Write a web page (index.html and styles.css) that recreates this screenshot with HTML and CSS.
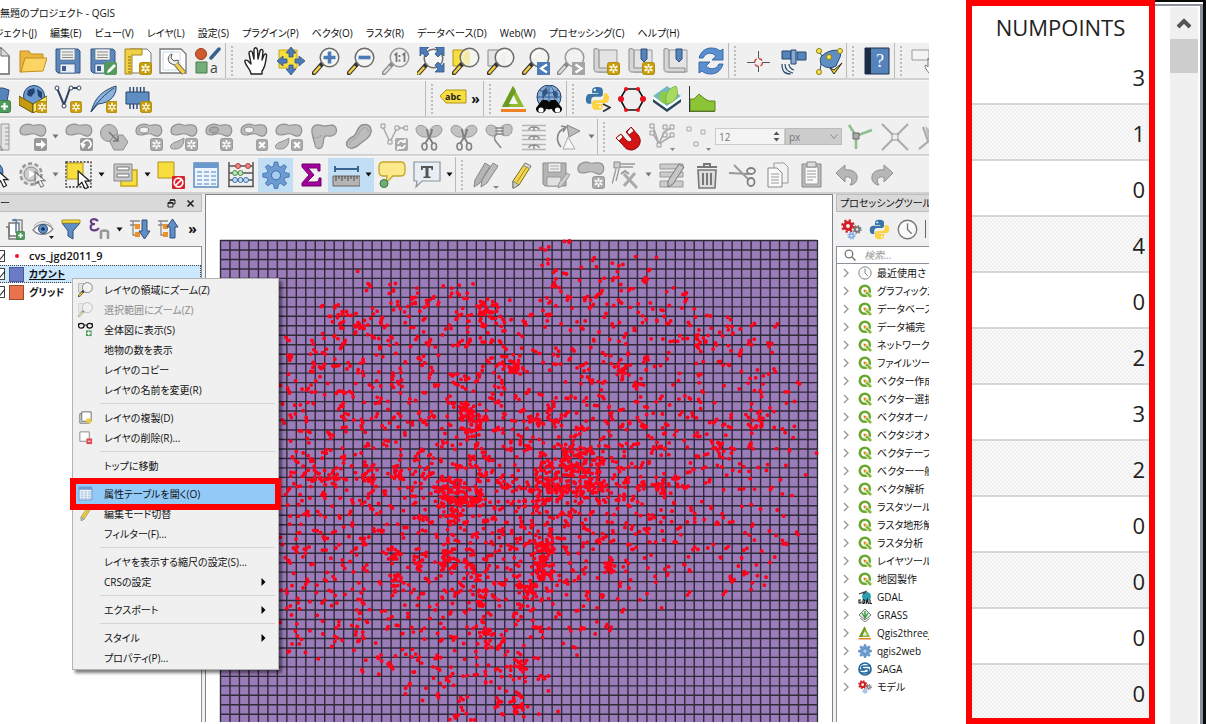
FILE: index.html
```html
<!DOCTYPE html>
<html lang="ja">
<head>
<meta charset="utf-8">
<title>無題のプロジェクト - QGIS</title>
<link rel="stylesheet" href="styles.css">
</head>
<body>
<svg class="sprite" aria-hidden="true">
  <defs>
    <symbol id="b-new" viewBox="0 0 13 13"><rect x=".5" y=".5" width="12" height="12" rx="2" fill="#c9a00c" stroke="#b08c08"/><path d="M6.500 2v9M2.600 4.200l7.800 4.600M10.400 4.200l-7.800 4.600" stroke="#fff" stroke-width="1.700"/><circle cx="6.500" cy="6.500" r="1.300" fill="#c9a00c"/></symbol>
    <symbol id="b-gnew" viewBox="0 0 13 13"><rect x=".5" y=".5" width="12" height="12" rx="2" fill="#aaa" stroke="#999"/><path d="M6.500 2v9M2.600 4.200l7.800 4.600M10.400 4.200l-7.800 4.600" stroke="#fff" stroke-width="1.700"/><circle cx="6.500" cy="6.500" r="1.300" fill="#aaa"/></symbol>
    <symbol id="b-x" viewBox="0 0 13 13"><rect x=".5" y=".5" width="12" height="12" rx="2" fill="#aaa" stroke="#999"/><path d="M3.500 3.500l6 6M9.500 3.500l-6 6" stroke="#fff" stroke-width="2.400"/></symbol>
    <symbol id="b-plus" viewBox="0 0 13 13"><rect x=".5" y=".5" width="12" height="12" rx="2" fill="#4f9a5c" stroke="#3a7d46"/><path d="M6.500 3v7M3 6.500h7" stroke="#fff" stroke-width="2.200"/></symbol>
    <symbol id="blob" viewBox="0 0 28 15"><path d="M1 8c0-6 7-8 12-6 5 1 7-1 10 0 4 1 5 7 2 10-3 3-6 0-9-1-4-1-7 1-10 1-3 0-5-1-5-4z" fill="#bdbdbd" stroke="#8f8f8f" stroke-width="1.200"/></symbol>
    <symbol id="mag" viewBox="0 0 28 28"><path d="M2 26l8-9" stroke="#333" stroke-width="4.500" stroke-linecap="round"/><path d="M2.500 25.500l5-5.500" stroke="#f4cd3b" stroke-width="2.600" stroke-linecap="round"/><circle cx="17.500" cy="10.500" r="9.300" fill="#f4f4f0" fill-opacity=".88" stroke="#6d6d6d" stroke-width="1.500"/><path d="M11 10a6.500 6.500 0 0 1 7-6" fill="none" stroke="#fff" stroke-width="1.500"/></symbol>
    <symbol id="gmag" viewBox="0 0 28 28"><path d="M2 26l8-9" stroke="#888" stroke-width="4.500" stroke-linecap="round"/><path d="M2.500 25.500l5-5.500" stroke="#ddd" stroke-width="2.400" stroke-linecap="round"/><circle cx="17.500" cy="10.500" r="9.300" fill="#f1f1f1" fill-opacity=".85" stroke="#999" stroke-width="1.500"/></symbol>
    <symbol id="ptr" viewBox="0 0 14 20"><path d="M1 1v14l3.500-3.200L7.500 18l3-1.500-3-5.800H12z" fill="#fff" stroke="#222" stroke-width="1.200"/></symbol>
    <symbol id="gear" viewBox="0 0 28 28"><g fill="#6c9bd4" stroke="#3d69a5" stroke-width=".8"><path d="M12.300 1h3.400l.8 4.100 2.200.9 3.500-2.400 2.400 2.400-2.400 3.500.9 2.200 4.100.8v3.400l-4.100.8-.9 2.200 2.400 3.500-2.400 2.400-3.500-2.400-2.200.9-.8 4.100h-3.400l-.8-4.100-2.200-.9-3.500 2.400-2.400-2.400L5.800 19l-.9-2.200-4.100-.8v-3.400l4.100-.8.900-2.200-2.400-3.500 2.400-2.400 3.500 2.400 2.200-.9z"/></g><circle cx="14" cy="14.300" r="4.500" fill="#a9cdf0" stroke="#3d69a5"/></symbol>
    <symbol id="floppy" viewBox="0 0 28 28"><path d="M2 2h22l2 2v22H4l-2-2z" fill="#5c87bd" stroke="#35577f"/><path d="M6 2h15v11H6z" fill="#f1f1ee" stroke="#54708f" stroke-width=".7"/><path d="M8 5h11M8 8h11M8 10.500h11" stroke="#888" stroke-width="1.200"/><path d="M6 17h15v9H6z" fill="#e9eef4" stroke="#35577f" stroke-width=".7"/><path d="M8 19h4v5H8z" fill="#3d5f8c"/></symbol>
    <symbol id="python" viewBox="0 0 28 28"><path d="M14 1c-5 0-6 2-6 4v3h7v1H5c-3 0-4 3-4 6 0 4 2 5 4 5h2v-4c0-2 1-4 4-4h6c2 0 3-1 3-3V5c0-3-2-4-6-4z" fill="#3a75a8"/><path d="M14 27c5 0 6-2 6-4v-3h-7v-1h10c3 0 4-3 4-6 0-3-2-5-4-5h-2v4c0 2-1 4-4 4h-6c-2 0-3 1-3 3v4c0 3 2 4 6 4z" fill="#fdd243"/><circle cx="11" cy="4.500" r="1.300" fill="#fff"/><circle cx="17" cy="23.500" r="1.300" fill="#fff"/></symbol>
    <symbol id="q" viewBox="0 0 14 14"><circle cx="6.800" cy="6.800" r="5" fill="#fff" stroke="#68a82f" stroke-width="2.600"/><path d="M7 7l6 6" stroke="#fff" stroke-width="4"/><path d="M8 8l5 5" stroke="#86b936" stroke-width="2.600"/><path d="M5.500 5.500l3.500.5-3 3z" fill="#ee7913"/></symbol>
    <symbol id="clock" viewBox="0 0 20 20"><circle cx="10" cy="10" r="8.800" fill="#fafafa" stroke="#777" stroke-width="1.300"/><path d="M10 4v6l4 4" fill="none" stroke="#777" stroke-width="1.300"/></symbol>
    <symbol id="cog3" viewBox="0 0 24 24"><g fill="none"><circle cx="8" cy="8" r="4" stroke="#cf1f24" stroke-width="3.500"/><circle cx="8" cy="8" r="6.500" stroke="#cf1f24" stroke-width="2.600" stroke-dasharray="2.600 2.500"/><circle cx="18.500" cy="12" r="2.500" stroke="#777" stroke-width="2.200"/><circle cx="18.500" cy="12" r="4.200" stroke="#777" stroke-width="1.800" stroke-dasharray="1.700 1.600"/><circle cx="12" cy="19" r="2.200" stroke="#8eb1e4" stroke-width="2.200"/><circle cx="12" cy="19" r="3.900" stroke="#8eb1e4" stroke-width="1.700" stroke-dasharray="1.600 1.500"/></g></symbol>
    <symbol id="tri" viewBox="0 0 28 28"><path d="M13 1l11 21H2z" fill="#8fba2f"/><path d="M13 1l3 5L9 22H2z" fill="#6c9a23"/><path d="M13.500 10l4.500 9H9z" fill="#f4f4f4"/><path d="M1 24h25v3H1z" fill="#ee8223"/></symbol>
    <symbol id="scis" viewBox="0 0 28 28"><path d="M13 7C9 1 2 1 1 6c0 5 5 9 12 8zM15 7c3-6 11-6 12-1 0 5-5 9-12 8z" fill="#c2c2c2" stroke="#999"/><path d="M12 6c0 6 3 9 6 15M17 6c0 6-4 9-7 15" stroke="#7c7c7c" stroke-width="1.800" fill="none"/><ellipse cx="9.500" cy="23.500" rx="2.500" ry="3.500" fill="none" stroke="#858585" stroke-width="1.700"/><ellipse cx="19" cy="23.500" rx="2.500" ry="3.500" fill="none" stroke="#858585" stroke-width="1.700"/></symbol>
    <symbol id="table" viewBox="0 0 28 28"><path d="M2 2h24v24H2z" fill="#eef4fb" stroke="#5d89bd" stroke-width="1.500"/><path d="M2 2h24v5H2z" fill="#6a98cf"/><path d="M5 11h5M12 11h5M19 11h5M5 15h5M12 15h5M19 15h5M5 19h5M12 19h5M19 19h5M5 23h5M12 23h5M19 23h5" stroke="#83a9d3" stroke-width="1.500"/></symbol>
    <symbol id="pencil" viewBox="0 0 28 28"><path d="M6 20L18 2l6 3-12 19-6 3z" fill="#f3d74f" stroke="#7b6b2a"/><path d="M10 21L21 4" stroke="#a68d22"/><path d="M6 20l6 4-6 3.500z" fill="#ccc" stroke="#777"/><path d="M18 2l6 3-1.500 2.500-6-3z" fill="#ddd" stroke="#888"/></symbol>
    <symbol id="map" viewBox="0 0 28 28"><path d="M6 3h19v22H6z" fill="#e4e4e4" stroke="#999"/><path d="M2 2c3-1 5 0 5 2v17h16v4H5c-2 0-3-1-3-3z" fill="#d6d6d6" stroke="#8c8c8c"/><path d="M7 4v17" stroke="#aaa"/></symbol>
    <symbol id="i-page" viewBox="0 0 28 28"><path d="M4 1h14l8 8v18H4z" fill="#fff" stroke="#666" stroke-width="1.500"/><path d="M18 1v8h8" fill="#ddd" stroke="#666"/></symbol>
    <symbol id="i-folder" viewBox="0 0 28 28"><path d="M1 4h9l2 3h12v5H8L3 25H1z" fill="#e9b53a" stroke="#c08e20"/><path d="M6 11h22l-4 13-22 1z" fill="#fbd464" stroke="#c08e20"/></symbol>
    <symbol id="i-saveas" viewBox="0 0 28 28"><use href="#floppy"/><rect x="15" y="15" width="13" height="13" rx="2" fill="#4f9a5c"/><path d="M18 26l1-3 6-6 2 2-6 6z" fill="#fff"/></symbol>
    <symbol id="i-layout" viewBox="0 0 28 28"><path d="M6 2h17l4 4v20H6z" fill="#fff" stroke="#777"/><path d="M1 2h17v6H8v19H1z" fill="#f0cf49" stroke="#a88717"/><path d="M4 10h3M4 13h3M4 16h3M4 19h3M4 22h3M4 25h3" stroke="#8a6d10"/><use href="#b-new" x="15" y="15" width="13" height="13"/></symbol>
    <symbol id="i-wrench" viewBox="0 0 28 28"><path d="M1 2h21l5 5v19H1z" fill="#fff" stroke="#777" stroke-width="1.300"/><path d="M4 5h17v18H4z" fill="none" stroke="#c9d6e6"/><path d="M13 7l-1 4 3 3 4-1c1 3-1 5-4 5l-4-2c-3-3-2-8 2-9z" fill="#eee" stroke="#555"/><path d="M17 17l8 9" stroke="#555" stroke-width="5"/><path d="M17 17l8 9" stroke="#f2cf46" stroke-width="3.400"/></symbol>
    <symbol id="i-style" viewBox="0 0 28 28"><circle cx="7" cy="7" r="5.500" fill="#cf5b2f" stroke="#a03c17"/><path d="M17 11l8-9" stroke="#38618f" stroke-width="3.500" stroke-linecap="round"/><path d="M2 15h11v11H2z" fill="#74ad77" stroke="#477d4b"/><text x="16" y="26" font-family="Open Sans, sans-serif" font-size="14" fill="#444">a</text></symbol>
    <symbol id="i-hand" viewBox="0 0 28 28"><path d="M9 27c0-4-5-8-6-12-1-2 2-3 4 0l2 2L7 6c0-2 3-3 3.500 0L12 12V3c0-3 3-3 3.500 0l.5 9 2-8c.5-2 3-2 3 .5L20 13l2-5c1-2 3-1 2.500 1-1 6-1 11-4.500 15v3z" fill="#fff" stroke="#222" stroke-width="1.400" stroke-linejoin="round"/></symbol>
    <symbol id="i-pan" viewBox="0 0 28 28"><path d="M2 3h18v18H2z" fill="#f8dd3f" stroke="#c6a61a"/><g fill="#4c7bb8" stroke="#2f5486" stroke-width=".8"><path d="M14 0l5 6h-3v4h-4V6H9zM14 28l5-6h-3v-4h-4v4H9zM0 14l6-5v3h4v4H6v3zM28 14l-6-5v3h-4v4h4v3z"/></g></symbol>
    <symbol id="i-zin" viewBox="0 0 28 28"><use href="#mag"/><path d="M17.500 4.500v12M11.500 10.500h12" stroke="#4c7bb8" stroke-width="3.600"/></symbol>
    <symbol id="i-zout" viewBox="0 0 28 28"><use href="#mag"/><path d="M11.500 10.500h12" stroke="#4c7bb8" stroke-width="3.600"/></symbol>
    <symbol id="i-z11" viewBox="0 0 28 28"><use href="#gmag"/><path d="M12.500 8l2-1.500V15M20.500 8l2-1.500V15M17.500 8v2M17.500 12.500v2" stroke="#777" stroke-width="1.800" fill="none"/></symbol>
    <symbol id="i-full" viewBox="0 0 28 28"><use href="#mag" x="-1" y="1"/><g fill="#4c7bb8" stroke="#2f5486" stroke-width=".8"><path d="M3 0h9L9 3l3 4-3 3-4-4-2 3zM27 0h-9l3 3-3 4 3 3 4-4 2 3zM27 25h-9l3-3-3-4 3-3 4 4 2-3z"/></g></symbol>
    <symbol id="i-zsel" viewBox="0 0 28 28"><path d="M1 3h16v16H1z" fill="#f8dd3f" stroke="#b0951b"/><use href="#mag"/><path d="M17.500 3v15a8 8 0 0 1-7-8c0-4 3-7 7-7z" fill="#f4e99a" opacity=".8"/></symbol>
    <symbol id="i-zlay" viewBox="0 0 28 28"><path d="M1 3h16v16H1z" fill="#e4e4e4" stroke="#888"/><use href="#mag"/></symbol>
    <symbol id="i-zlast" viewBox="0 0 28 28"><use href="#mag"/><path d="M15 15h13v13H15z" fill="#4c7bb8"/><path d="M25 17.500l-6 4 6 4" fill="none" stroke="#fff" stroke-width="2.200"/></symbol>
    <symbol id="i-znext" viewBox="0 0 28 28"><use href="#gmag"/><path d="M15 15h13v13H15z" fill="#a5a5a5"/><path d="M18.500 17.500l6 4-6 4" fill="none" stroke="#fff" stroke-width="2.200"/></symbol>
    <symbol id="i-mapnew" viewBox="0 0 28 28"><use href="#map"/><use href="#b-new" x="15" y="15" width="13" height="13"/></symbol>
    <symbol id="i-bm" viewBox="0 0 28 28"><use href="#map"/><path d="M14 2h6v10l-3 3-3-3z" fill="#5683ba" stroke="#2d4f7d"/></symbol>
    <symbol id="i-bmnew" viewBox="0 0 28 28"><use href="#i-bm"/><use href="#b-new" x="15" y="15" width="13" height="13"/></symbol>
    <symbol id="i-refresh" viewBox="0 0 28 28"><g fill="#5b8fd0" stroke="#2f62a2" stroke-width=".9"><path d="M2 11C4 4 9 1 14 1c4 0 7 1 9 3l3-2v11H15l4-4c-4-4-10-4-13 2z"/><path d="M26 17c-2 7-7 10-12 10-4 0-7-1-9-3l-3 2V15h11l-4 4c4 4 10 4 13-2z"/></g></symbol>
    <symbol id="i-cross" viewBox="0 0 28 28"><path d="M13.500 4v7M13.500 19v6M2 15.500h8M17 15.500h8" stroke="#555"/><circle cx="13.500" cy="15.500" r="4" fill="none" stroke="#c4403b" stroke-width="1.400" stroke-dasharray="4 2.200"/></symbol>
    <symbol id="i-gps" viewBox="0 0 28 28"><g fill="#5683ba" stroke="#27476f"><path d="M2 4h9v8H2zM17 5h9v8h-9z"/><path d="M11 3h5v14h-5z" fill="#87aad3"/></g><path d="M5 17c0 6 3 8 8 9M2 17c0 8 3 10 9 10M9 17c0 4 2 5 5 6" stroke="#27476f" fill="none" stroke-width="1.200"/></symbol>
    <symbol id="i-topo" viewBox="0 0 28 28"><path d="M6 10c5-6 14-8 19-6 2 6-2 9-4 15-5 3-11 2-15-2-1-3-1-5 0-7z" fill="#5f8ec5" stroke="#27476f"/><path d="M4 4l3 5M5 24l1-7" stroke="#27476f"/><g fill="#fbe64a" stroke="#8a7a15"><circle cx="4" cy="4" r="2.500"/><circle cx="25" cy="4" r="2.500"/><circle cx="4" cy="25" r="2.500"/><circle cx="14" cy="10" r="2.500"/></g><path d="M15 21l4 6 8-11-8 7z" fill="#f6db2e" stroke="#222"/></symbol>
    <symbol id="i-help" viewBox="0 0 28 28"><path d="M2 1h24v26H2z" fill="#5683ba" stroke="#1c3150"/><path d="M2 1h6v26H2z" fill="#1d2c42"/><text x="13" y="20" font-family="Liberation Serif, serif" font-size="18" fill="#fff">?</text></symbol>
    <symbol id="i-note" viewBox="0 0 28 28"><path d="M1 3h17v10H1z" fill="#f4f4f4" stroke="#999"/><path d="M17 11v9l-2-2c-2 0-1 3 3 8h8v-8l-6-2z" stroke="#777" fill="#fff"/></symbol>
    <symbol id="i-db" viewBox="0 0 28 28"><path d="M2 3l18 0 6 2-3 17H2z" fill="#5683ba" stroke="#2d4f7d"/><use href="#b-plus" x="15" y="15" width="13" height="13"/></symbol>
    <symbol id="i-globebox" viewBox="0 0 28 28"><circle cx="15" cy="11" r="10.500" fill="#6c9bd1" stroke="#274a78"/><path d="M9 5l6-2 1 4-4 5-4-2zM18 4l5 3v7l-4-3z" fill="#23436c"/><path d="M0 11l14 8v9L0 20z" fill="#c39a10" stroke="#6b5407"/><path d="M14 19l14-8v10l-14 7z" fill="#fae96e" stroke="#6b5407"/><use href="#b-new" x="17" y="16" width="12" height="12"/></symbol>
    <symbol id="i-vec" viewBox="0 0 28 28"><path d="M3 3l7 17 6-17h9" fill="none" stroke="#2e435f" stroke-width="2"/><g fill="#fff" stroke="#2e435f"><circle cx="3" cy="3" r="2"/><circle cx="10" cy="21" r="2"/><circle cx="17" cy="3" r="2"/><circle cx="25" cy="3" r="2"/></g><use href="#b-new" x="16" y="16" width="12" height="12"/></symbol>
    <symbol id="i-feather" viewBox="0 0 28 28"><path d="M2 27C5 17 9 7 27 1c1 8-5 17-18 18z" fill="#8db3dc" stroke="#27476f"/><path d="M2 27C8 17 16 9 25 3" fill="none" stroke="#27476f"/><use href="#b-new" x="17" y="16" width="12" height="12"/></symbol>
    <symbol id="i-chip" viewBox="0 0 28 28"><path d="M6 2v22M9.500 2v22M13 2v22M16.500 2v22M20 2v22" stroke="#27476f" stroke-width="1.400"/><path d="M2 7h23v12H2z" fill="#5f8ec5" stroke="#27476f"/><use href="#b-new" x="16" y="16" width="12" height="12"/></symbol>
    <symbol id="i-abc" viewBox="0 0 28 28"><path d="M1 11l6-6h20v13H7z" fill="#f8dd3f" stroke="#b0951b"/><text x="6" y="15" font-family="Open Sans, sans-serif" font-size="9" font-weight="700" fill="#222">abc</text></symbol>
    <symbol id="i-binoc" viewBox="0 0 28 28"><circle cx="14" cy="12" r="12" fill="#86abd4" stroke="#1f3b61"/><path d="M2 12h24M14 0v24M5 5c5 4 13 4 18 0M14 0c-8 6-8 16 0 24M14 0c8 6 8 16 0 24" fill="none" stroke="#375e90"/><path d="M7 6l5-3 1 5-5 5zM18 5l5 3-1 6-4-4z" fill="#315585"/><path d="M7 15h5l2 2 2-2h5l6 8c1 6-9 7-10 1h-6c-1 6-11 5-10-1z" fill="#080808"/><circle cx="6" cy="25" r="2.600" fill="#fff"/><circle cx="22.500" cy="25" r="2.600" fill="#fff"/></symbol>
    <symbol id="i-py" viewBox="0 0 28 28"><use href="#python" x="2" y="1" width="25" height="25"/><path d="M20 19l7 3.500-7 4" fill="none" stroke="#333" stroke-width="1.800"/></symbol>
    <symbol id="i-hex" viewBox="0 0 28 28"><path d="M8 4h12l6 10-6 11H8L2 14z" fill="none" stroke="#111" stroke-width="1.600"/><g fill="#e80f1c"><circle cx="8" cy="4" r="2"/><circle cx="20" cy="4" r="2"/><circle cx="8" cy="25" r="2"/><circle cx="20" cy="25" r="2"/><circle cx="25" cy="14" r="3"/><circle cx="3" cy="14" r="3"/></g></symbol>
    <symbol id="i-leaf" viewBox="0 0 28 28"><path d="M0 13v4l14 10 14-10v-4z" fill="#26495b"/><path d="M0 11v3l14 10 14-10v-3z" fill="#fff"/><path d="M0 11L14 1l14 10-14 10z" fill="#74b9c4"/><path d="M6 12c0-5 3-6 9-5l-1 12c-5 0-8-3-8-7z" fill="#8ccb4b"/><path d="M13 16C12 7 17 3 23 1c4 9 0 17-10 18z" fill="#a8da62" stroke="#6faa33" stroke-width=".7"/></symbol>
    <symbol id="i-prof" viewBox="0 0 28 28"><path d="M2 14l4 0 5-5 6 5 4 2h6v10H2z" fill="#8bc535" stroke="#5b8820"/><path d="M1.500 1v26" stroke="#333"/><path d="M2 26.500h25" stroke="#5b6b31"/></symbol>
    <symbol id="i-ruler" viewBox="0 0 28 28"><path d="M18 1h8v26h-8z" fill="#e3e3e3" stroke="#999"/><path d="M2 4l18 23H2z" fill="#c6c6c6" stroke="#888"/><path d="M22 5h4M22 9h4M22 13h4M22 17h4M22 21h4" stroke="#999"/></symbol>
    <symbol id="g-move" viewBox="0 0 28 28"><use href="#blob" width="28" height="15"/><rect x="15" y="15" width="13" height="13" rx="2" fill="#999"/><path d="M17 20h5v-3l5 4.500-5 4.500v-3h-5z" fill="#fff"/></symbol>
    <symbol id="g-rot" viewBox="0 0 28 28"><use href="#blob" width="28" height="15"/><rect x="15" y="15" width="13" height="13" rx="2" fill="#999"/><path d="M18 22a4 4 0 1 1 5 3M20 21l-2 3-2-4" stroke="#fff" stroke-width="1.800" fill="none"/></symbol>
    <symbol id="g-simp" viewBox="0 0 28 28"><circle cx="9" cy="10" r="8.500" fill="#bdbdbd" stroke="#8f8f8f"/><path d="M14 12h9l5 7-5 8h-9l-4-8z" fill="#bdbdbd" stroke="#8f8f8f"/><path d="M9 9l9 9M18 13v5h-5" stroke="#777" stroke-width="1.500" fill="none"/></symbol>
    <symbol id="g-ring" viewBox="0 0 28 28"><use href="#blob" width="28" height="15"/><ellipse cx="9" cy="7" rx="4.500" ry="3" fill="#f0f0f0" stroke="#8f8f8f"/><use href="#b-gnew" x="15" y="15" width="13" height="13"/></symbol>
    <symbol id="g-part" viewBox="0 0 28 28"><use href="#blob" width="28" height="15"/><path d="M14 15c0 6-2 11-9 11-4 0-6-1-4-4 3-4 8-3 13-7z" fill="#bdbdbd" stroke="#8f8f8f"/><use href="#b-gnew" x="15" y="15" width="13" height="13"/></symbol>
    <symbol id="g-fill" viewBox="0 0 28 28"><use href="#blob" width="28" height="15"/><ellipse cx="9" cy="7" rx="4.500" ry="3" fill="#aaa" stroke="#888"/><use href="#b-gnew" x="15" y="15" width="13" height="13"/></symbol>
    <symbol id="g-dring" viewBox="0 0 28 28"><use href="#blob" width="28" height="15"/><ellipse cx="9" cy="7" rx="4.500" ry="3" fill="#f0f0f0" stroke="#8f8f8f"/><use href="#b-x" x="16" y="16" width="12" height="12"/></symbol>
    <symbol id="g-dpart" viewBox="0 0 28 28"><use href="#blob" width="28" height="15"/><path d="M14 15c0 6-2 11-9 11-4 0-6-1-4-4 3-4 8-3 13-7z" fill="#bdbdbd" stroke="#8f8f8f"/><use href="#b-x" x="16" y="16" width="12" height="12"/></symbol>
    <symbol id="g-resh" viewBox="0 0 28 28"><path d="M2 6c2-6 8-4 12-3 4 0 10-3 12 2 2 6-3 9-8 8-5-1-4 4-5 8-1 6-7 6-8 1-1-5-4-11-3-16z" fill="#bdbdbd" stroke="#8f8f8f" stroke-width="1.200"/><path d="M3 15c4 0 8-1 9-4" fill="none" stroke="#888" stroke-dasharray="2 1.500"/></symbol>
    <symbol id="g-off" viewBox="0 0 28 28"><path d="M2 23c-2-5 3-8 7-10 3-2 3-9 8-11 6-2 10 2 9 7-1 6-6 8-10 11-4 4-11 8-14 3z" fill="#bdbdbd" stroke="#8f8f8f" stroke-width="1.400"/><path d="M5 22c-1-3 3-5 6-7 3-2 3-8 7-10 4-1 6 1 5 4" fill="none" stroke="#a2a2a2"/></symbol>
    <symbol id="g-vert" viewBox="0 0 28 28"><path d="M3 4l7 15 7-14h9" fill="none" stroke="#aaa" stroke-width="1.500"/><path d="M1 1h4v4H1zM8 17h4v4H8zM15 3h4v4h-4zM24 3h4v4h-4z" fill="#eee" stroke="#999"/><rect x="15" y="15" width="13" height="13" rx="2" fill="#aaa"/><path d="M18 21c1-4 5-4 7-2M25 22c-1 4-5 4-7 2M25 16v3h-3M18 27v-3h3" fill="none" stroke="#fff" stroke-width="1.500"/></symbol>
    <symbol id="g-merge" viewBox="0 0 28 28"><path d="M12 5C8 1 2 1 1 6c0 5 5 9 11 6zM17 3c6-3 11-2 10 4 0 5-5 7-10 5z" fill="#c2c2c2" stroke="#999"/><path d="M10 5h9M10 8h9M10 11h9M10 12c-2 6 3 8 6 13" fill="none" stroke="#888" stroke-width="1.500"/></symbol>
    <symbol id="g-attr" viewBox="0 0 28 28"><path d="M2 2.500h24M2 7.500h24M2 12.500h24M2 16.500h24M2 21.500h24M2 26.500h24" stroke="#b5b5b5" stroke-width="1.300"/><path d="M9 7c0-4 10-4 10 0M9 16c0-4 10-4 10 0M9 25c0-4 10-4 10 0M14 4v4M14 13v4M14 22v4" fill="none" stroke="#8f8f8f" stroke-width="1.500"/></symbol>
    <symbol id="g-rsym" viewBox="0 0 28 28"><path d="M12 2l13 6-11 6z" fill="#bbb" stroke="#888"/><path d="M13 14l7 12H8z" fill="#f6f6f6" stroke="#aaa"/><path d="M6 24C0 17 2 8 10 5M6 3l5 1-3 5" fill="none" stroke="#888" stroke-width="1.700"/></symbol>
    <symbol id="i-magnet" viewBox="0 0 28 28"><path d="M2 15l5-4 5 6c3 3 6 2 6-1l-6-7 5-5 7 8c5 6 1 14-6 15-5 0-7-2-9-5z" fill="#d41414" stroke="#8d0b0b"/><path d="M2 15l5-4 2 3-4 4zM13 9l4-5 3 4-5 4z" fill="#f5f5f5" stroke="#a11"/></symbol>
    <symbol id="g-snap" viewBox="0 0 28 28"><path d="M4 3l6 18 5-12 9-5M3 9l7 12 14-9" fill="none" stroke="#aaa" stroke-width="1.500"/><path d="M1 1h4v4H1zM1 8h4v4H1zM14 2h4v4h-4zM21 2h4v4h-4zM14 10h4v4h-4zM21 10h4v4h-4zM8 20h4v4H8z" fill="#eee" stroke="#999"/><path d="M21 25h5l-2.500 3z" fill="#888"/></symbol>
    <symbol id="g-seg" viewBox="0 0 28 28"><path d="M3 4h4v4H3zM17 7h4v4h-4zM10 19h4v4h-4z" fill="#eee" stroke="#aaa"/><path d="M22 25h5l-2.500 3z" fill="#888"/></symbol>
    <symbol id="i-topoed" viewBox="0 0 28 28"><path d="M3 2l7 11 16-6M10 13v13" stroke="#8cc08f" stroke-width="2.600" fill="none"/><path d="M7 10h6v6H7z" fill="#aaa" stroke="#666"/></symbol>
    <symbol id="g-xs" viewBox="0 0 28 28"><path d="M1 1l26 26M27 1L1 27" stroke="#aaa" stroke-width="2"/><path d="M11 11h6v6h-6z" fill="#eee" stroke="#999"/></symbol>
    <symbol id="g-trace" viewBox="0 0 28 28"><path d="M7 4l5 14M3 26l11-9" fill="none" stroke="#aaa" stroke-width="2.200"/><path d="M9 3l12 10-7 10z" fill="#bbb"/></symbol>
    <symbol id="i-identify" viewBox="0 0 28 28"><circle cx="10" cy="11" r="10" fill="#5f8ec5" stroke="#2d4f7d"/><use href="#ptr" x="13" y="8" width="14" height="20"/></symbol>
    <symbol id="g-act" viewBox="0 0 28 28"><circle cx="12" cy="13" r="10.500" fill="#e4e4e4" stroke="#999" stroke-width="2.600" stroke-dasharray="4 2.600"/><circle cx="12" cy="13" r="7" fill="#ccc" stroke="#888"/><path d="M10 9l6 4-6 4z" fill="#fff"/><g opacity=".55"><use href="#ptr" x="15" y="10" width="13" height="18"/></g></symbol>
    <symbol id="i-select" viewBox="0 0 28 28"><path d="M1 1h25v25H1z" fill="none" stroke="#333" stroke-dasharray="2 1.500" stroke-width="1.300"/><path d="M2 2h16v16H2z" fill="#f8dd3f" stroke="#b0951b"/><use href="#ptr" x="11" y="9" width="17" height="21"/></symbol>
    <symbol id="i-selval" viewBox="0 0 28 28"><path d="M10 9h16v16H10z" fill="#f8dd3f" stroke="#c3a51d" stroke-width="1.500"/><path d="M3 3h18v17H3z" fill="#c9c9c9" stroke="#888"/><path d="M6 6h12v3H6zM6 13h12v3H6z" fill="#fff" stroke="#777"/></symbol>
    <symbol id="i-desel" viewBox="0 0 28 28"><path d="M1 1h16v16H1z" fill="#f8dd3f" stroke="#b0951b"/><rect x="15" y="15" width="13" height="13" rx="1" fill="#d8242a"/><circle cx="21.500" cy="21.500" r="4.300" fill="none" stroke="#fff" stroke-width="1.700"/><path d="M18.500 24.500l6-6" stroke="#fff" stroke-width="1.700"/></symbol>
    <symbol id="i-abacus" viewBox="0 0 28 28"><path d="M2 1v25M26 1v25M1 25.500h26M2 5h24M2 12h24M2 19h24" stroke="#555" stroke-width="1.500"/><g fill="#e88" stroke="#b03a3a"><circle cx="11" cy="5" r="2.500"/><circle cx="21" cy="5" r="2.500"/></g><g fill="#bfe3bd" stroke="#4c9148"><circle cx="8" cy="12" r="2.500"/><circle cx="13.500" cy="12" r="2.500"/></g><g fill="#c4ddf4" stroke="#3d6fa5"><circle cx="8" cy="19" r="2.500"/><circle cx="13.500" cy="19" r="2.500"/><circle cx="19" cy="19" r="2.500"/></g></symbol>
    <symbol id="i-sigma" viewBox="0 0 28 28"><path d="M5 3h18v7h-2c0-3-1-3-3-3h-7l6 7-7 7h8c3 0 4-1 4-4h2v8H5v-3l7-8-7-8z" fill="#a4009e" stroke="#6f006b"/></symbol>
    <symbol id="i-measure" viewBox="0 0 28 28"><path d="M3 8h23M3 5v6M26 5v6" stroke="#3a6494" stroke-width="2"/><path d="M1 15h27v10H1z" fill="#b4b4b4" stroke="#666"/><path d="M4 15v5M7 15v3M10 15v5M13 15v3M16 15v5M19 15v3M22 15v5M25 15v3" stroke="#444"/></symbol>
    <symbol id="i-tip" viewBox="0 0 28 28"><path d="M5 1h18c3 0 4 2 4 5v4c0 3-1 5-4 5h-8l-7 7 1-7H5c-3 0-4-2-4-5V6c0-3 1-5 4-5z" fill="#fbe98b" stroke="#c2a528" stroke-width="1.300"/><circle cx="6" cy="22.500" r="4" fill="#6fae73" stroke="#3b7740"/></symbol>
    <symbol id="i-text" viewBox="0 0 28 28"><path d="M1 1h26v19H9l-6 6 1-6H1z" fill="#e8eef3" stroke="#8a949e" stroke-width="1.200"/><path d="M8 5h12v4h-1.500l-.5-2h-2.500v8.500h2V17h-7v-1.500h2V7H10l-.5 2H8z" fill="#555"/></symbol>
    <symbol id="g-pens" viewBox="0 0 28 28"><path d="M3 19L13 2l5 3L8 22l-6 4z" fill="#b5b5b5" stroke="#888"/><path d="M10 19L21 2l5 3-11 17-6 4z" fill="#bcbcbc" stroke="#888"/><path d="M21 25h6l-3 3z" fill="#888"/></symbol>
    <symbol id="g-save" viewBox="0 0 28 28"><path d="M1 2h23v23H3l-2-2z" fill="#b4b4b4" stroke="#8a8a8a"/><path d="M6 2h13v9H6z" fill="#eee" stroke="#999"/><path d="M8 5h9M8 8h9" stroke="#aaa"/><path d="M5 16h14v9H5z" fill="#e2e2e2" stroke="#999"/><path d="M17 22l8-10 3 2-8 11-4 2z" fill="#ccc" stroke="#999"/></symbol>
    <symbol id="g-add" viewBox="0 0 28 28"><use href="#blob" width="28" height="15"/><use href="#b-gnew" x="15" y="15" width="13" height="13"/></symbol>
    <symbol id="g-tool" viewBox="0 0 28 28"><path d="M2 1h6v6H2z" fill="#ccc" stroke="#888"/><path d="M8 3h15M8 6h13M4 8L0 23M7 8L4 20" stroke="#999" stroke-width="1.300"/><path d="M12 25l11-13M12 13l13 14" stroke="#aaa" stroke-width="3"/><path d="M9 13l4-3 4 3" fill="none" stroke="#999" stroke-width="2"/></symbol>
    <symbol id="g-tabed" viewBox="0 0 28 28"><path d="M2 3h23v5H2zM2 11h23v5H2zM2 20h23v6H2z" fill="#ccc" stroke="#999"/><path d="M10 20L21 3l5 3-11 17-5 3z" fill="#c6c6c6" stroke="#777"/></symbol>
    <symbol id="g-trash" viewBox="0 0 28 28"><path d="M5 9h18l-1 18H6z" fill="#ddd" stroke="#777" stroke-width="1.600"/><path d="M4 6h20M11 6V3h6v3M10 12v12M14 12v12M18 12v12" fill="none" stroke="#777" stroke-width="2"/></symbol>
    <symbol id="g-cut" viewBox="0 0 28 28"><path d="M1 12l20 1M6 4l15 15" stroke="#999" stroke-width="1.800"/><ellipse cx="23" cy="10" rx="4" ry="3" fill="none" stroke="#808080" stroke-width="1.800"/><ellipse cx="23" cy="21" rx="3.500" ry="4" fill="none" stroke="#808080" stroke-width="1.800"/></symbol>
    <symbol id="g-copy" viewBox="0 0 28 28"><path d="M11 2h10l4 4v16H11z" fill="#f2f2f2" stroke="#999"/><path d="M5 7h9l5 5v14H5z" fill="#fafafa" stroke="#888"/><path d="M8 13h8M8 16h8M8 19h8M8 22h8" stroke="#999"/></symbol>
    <symbol id="g-paste" viewBox="0 0 28 28"><path d="M4 3h19v23H4z" fill="#bbb" stroke="#888"/><path d="M7 6h13v17H7z" fill="#fafafa" stroke="#999"/><path d="M9 1h9v5H9z" fill="#ddd" stroke="#888"/><path d="M9 10h9M9 13h9M9 16h9M9 19h6" stroke="#999"/></symbol>
    <symbol id="g-undo" viewBox="0 0 28 28"><path d="M3 12l9-8v5c8-1 13 3 12 9-1 4-4 6-7 6 4-5 1-9-5-8v5z" fill="#b7b7b7" stroke="#909090"/></symbol>
    <symbol id="g-redo" viewBox="0 0 28 28"><path d="M25 12l-9-8v5C8 8 3 12 4 18c1 4 4 6 7 6-4-5-1-9 5-8v5z" fill="#b7b7b7" stroke="#909090"/></symbol>
    <symbol id="l-group" viewBox="0 0 22 22"><path d="M5 5h10v13H5z" fill="#fff" stroke="#777" stroke-width="1.500"/><path d="M2 9h3v12h10" fill="none" stroke="#777" stroke-width="1.500"/><path d="M8 2h10v13" fill="none" stroke="#888" stroke-width="1.500"/><path d="M9 3c2-3 4-1 3 2v10" fill="none" stroke="#4a78ad" stroke-width="1.500"/><use href="#b-plus" x="12" y="13" width="9" height="9"/></symbol>
    <symbol id="l-eye" viewBox="0 0 22 22"><path d="M1 12C6 5 15 4 21 11 15 18 6 18 1 12z" fill="#fff" stroke="#888" stroke-width="1.300"/><path d="M2 8C7 2 15 2 20 8" fill="none" stroke="#aaa"/><circle cx="11" cy="11" r="4.500" fill="#5f8ec5" stroke="#2d4f7d"/><circle cx="11" cy="11" r="1.800" fill="#142b49"/><path d="M17 18h5l-2.500 3z" fill="#222"/></symbol>
    <symbol id="l-filter" viewBox="0 0 22 22"><path d="M2 5h18l-7 8v8l-5-3v-5z" fill="#5f8ec5" stroke="#2d4f7d"/><path d="M2 2h18v3H2z" fill="#f6df3e" stroke="#a8921b"/></symbol>
    <symbol id="l-eps" viewBox="0 0 22 22"><path d="M10 3C7 0 2 1 3 4c0 2 2 2 4 2-4 0-5 2-4 5 1 2 6 2 8-1" fill="none" stroke="#6a3d82" stroke-width="2.200"/><path d="M13 21v-7c0-2 7-2 7 0v7" fill="none" stroke="#999" stroke-width="2.600"/></symbol>
    <symbol id="l-exp" viewBox="0 0 22 22"><path d="M1 3h10M1 7h10M4 3v14h5" fill="none" stroke="#888" stroke-width="1.300"/><path d="M6 6h5v5H6zM6 14h5v5H6z" fill="#ef8f28"/><path d="M13 2h5v11h3l-5.500 8L10 13h3z" fill="#5f8ec5" stroke="#2d4f7d"/></symbol>
    <symbol id="l-col" viewBox="0 0 22 22"><path d="M1 3h10M1 7h10M4 3v14h5" fill="none" stroke="#888" stroke-width="1.300"/><path d="M6 6h5v5H6zM6 14h5v5H6z" fill="#ef8f28"/><path d="M13 20h5V9h3l-5.500-8L10 9h3z" fill="#5f8ec5" stroke="#2d4f7d"/></symbol>
    <symbol id="chev" viewBox="0 0 8 10"><path d="M2 1l4 4-4 4" fill="none" stroke="#999" stroke-width="1.400"/></symbol>
    <symbol id="arr" viewBox="0 0 7 5"><path d="M.5 .5h6L3.500 4.500z" fill="currentColor"/></symbol>
    <symbol id="sub" viewBox="0 0 5 8"><path d="M.5 0l4 4-4 4z" fill="#000"/></symbol>
    <symbol id="m-glass" viewBox="0 0 16 16"><path d="M0 2l2 0M14 2h2M6 4c1-1 3-1 4 0" fill="none" stroke="#111"/><ellipse cx="3.500" cy="4" rx="3" ry="2.500" fill="none" stroke="#111" stroke-width="1.300"/><ellipse cx="12.500" cy="4" rx="3" ry="2.500" fill="none" stroke="#111" stroke-width="1.300"/><path d="M8.500 9h6v6h-6z" fill="#4f9a5c"/><path d="M11.500 10v4M9.500 12h4" stroke="#fff" stroke-width="1.400"/></symbol>
    <symbol id="m-dup" viewBox="0 0 16 16"><path d="M4 2h10v10H4z" fill="#fff" stroke="#666"/><path d="M4 4H2v10h10v-2" fill="none" stroke="#666"/><path d="M9 9h5v5H9z" fill="#eccb3d"/></symbol>
    <symbol id="m-del" viewBox="0 0 16 16"><path d="M2 2h10v10H2z" fill="#fff" stroke="#888"/><path d="M9 9h6v6H9z" fill="#dd4a4f"/><path d="M10.500 12h3" stroke="#fff"/></symbol>
    <symbol id="p-gdal" viewBox="0 0 14 14"><circle cx="8.500" cy="6.500" r="4.500" fill="#2c9fb2"/><path d="M1 4l8-3M5 4l3-2" stroke="#444" stroke-width="1.300"/><path d="M3 10H1v3h2v-1.500M5 9.500v4c2.500 0 2.500-4 0-4M8 14l1.300-4.500L10.500 14M12 9.500v4h2" fill="none" stroke="#111" stroke-width="1.100"/></symbol>
    <symbol id="p-grass" viewBox="0 0 14 14"><path d="M1 7l6-6 6 6-6 5z" fill="#e8f3e5" stroke="#777"/><path d="M2 10l5 4 5-4" fill="none" stroke="#888"/><path d="M7 11V3M7 10L4 5M7 10l3-5" stroke="#39984a" stroke-width="1.400"/></symbol>
    <symbol id="p-saga" viewBox="0 0 14 14"><circle cx="7" cy="7" r="6" fill="#fff" stroke="#21669c" stroke-width="1.700"/><path d="M13 4H6C3 4 3 7 6 7h3c3 0 2 4-1 4H3M1 8h6" fill="none" stroke="#21669c" stroke-width="1.700"/></symbol>
  </defs>
</svg>

<main class="page">
  <section class="app">
    <header class="title">無題のプロジェクト - QGIS</header>
    <nav class="menubar">
      <button class="m-cut"><span>ジェクト(J)</span></button><button>編集(E)</button><button>ビュー(V)</button><button>レイヤ(L)</button><button>設定(S)</button><button>プラグイン(P)</button><button>ベクタ(O)</button><button>ラスタ(R)</button><button>データベース(D)</button><button>Web(W)</button><button>プロセッシング(C)</button><button>ヘルプ(H)</button>
    </nav>

    <div class="toolbar">
      <button class="tool cut" aria-label="新規"><svg><use href="#i-page"/></svg></button>
      <button class="tool" aria-label="開く"><svg><use href="#i-folder"/></svg></button>
      <button class="tool" aria-label="保存"><svg><use href="#floppy"/></svg></button>
      <button class="tool" aria-label="別名で保存"><svg><use href="#i-saveas"/></svg></button>
      <button class="tool" aria-label="レイアウト"><svg><use href="#i-layout"/></svg></button>
      <button class="tool" aria-label="レイアウト管理"><svg><use href="#i-wrench"/></svg></button>
      <button class="tool" aria-label="スタイル管理"><svg><use href="#i-style"/></svg></button>
      <i class="sep"></i>
      <button class="tool" aria-label="移動"><svg><use href="#i-hand"/></svg></button>
      <button class="tool" aria-label="選択部分へ移動"><svg><use href="#i-pan"/></svg></button>
      <button class="tool" aria-label="拡大"><svg><use href="#i-zin"/></svg></button>
      <button class="tool" aria-label="縮小"><svg><use href="#i-zout"/></svg></button>
      <button class="tool" aria-label="等倍"><svg><use href="#i-z11"/></svg></button>
      <button class="tool" aria-label="全域表示"><svg><use href="#i-full"/></svg></button>
      <button class="tool" aria-label="選択へズーム"><svg><use href="#i-zsel"/></svg></button>
      <button class="tool" aria-label="レイヤへズーム"><svg><use href="#i-zlay"/></svg></button>
      <button class="tool" aria-label="前の表示"><svg><use href="#i-zlast"/></svg></button>
      <button class="tool" aria-label="次の表示"><svg><use href="#i-znext"/></svg></button>
      <button class="tool" aria-label="新規ビュー"><svg><use href="#i-mapnew"/></svg></button>
      <button class="tool" aria-label="新規ブックマーク"><svg><use href="#i-bmnew"/></svg></button>
      <button class="tool" aria-label="ブックマーク"><svg><use href="#i-bm"/></svg></button>
      <button class="tool" aria-label="再読込"><svg><use href="#i-refresh"/></svg></button>
      <i class="sep"></i>
      <button class="tool" aria-label="座標"><svg><use href="#i-cross"/></svg></button>
      <button class="tool" aria-label="GPS"><svg><use href="#i-gps"/></svg></button>
      <button class="tool" aria-label="トポロジ"><svg><use href="#i-topo"/></svg></button>
      <i class="sep"></i>
      <button class="tool" aria-label="ヘルプ"><svg><use href="#i-help"/></svg></button>
      <i class="sep"></i>
      <button class="tool" aria-label="注記"><svg><use href="#i-note"/></svg></button>
    </div>

    <div class="toolbar">
      <div class="lead">
        <button class="tool cut" aria-label="レイヤ追加"><svg><use href="#i-db"/></svg></button>
        <button class="tool" aria-label="GeoPackage"><svg><use href="#i-globebox"/></svg></button>
        <button class="tool" aria-label="シェープファイル"><svg><use href="#i-vec"/></svg></button>
        <button class="tool" aria-label="SpatiaLite"><svg><use href="#i-feather"/></svg></button>
        <button class="tool" aria-label="一時レイヤ"><svg><use href="#i-chip"/></svg></button>
      </div>
      <i class="sep"></i>
      <button class="tool slim" aria-label="ラベル"><svg><use href="#i-abc"/></svg></button>
      <button class="more">»</button>
      <i class="sep"></i>
      <button class="tool" aria-label="Qgis2threejs"><svg><use href="#tri"/></svg></button>
      <button class="tool" aria-label="検索"><svg><use href="#i-binoc"/></svg></button>
      <i class="sep"></i>
      <button class="tool" aria-label="Python"><svg><use href="#i-py"/></svg></button>
      <button class="tool" aria-label="多角形"><svg><use href="#i-hex"/></svg></button>
      <button class="tool" aria-label="背景地図"><svg><use href="#i-leaf"/></svg></button>
      <button class="tool" aria-label="断面図"><svg><use href="#i-prof"/></svg></button>
    </div>

    <div class="toolbar">
      <button class="tool cut" aria-label="高度デジタイズ"><svg><use href="#i-ruler"/></svg></button>
      <button class="tool" aria-label="地物移動"><svg><use href="#g-move"/></svg></button>
      <button class="drop dim" aria-label="その他"><svg><use href="#arr"/></svg></button>
      <button class="tool" aria-label="回転"><svg><use href="#g-rot"/></svg></button>
      <button class="tool" aria-label="簡素化"><svg><use href="#g-simp"/></svg></button>
      <button class="tool" aria-label="リング追加"><svg><use href="#g-ring"/></svg></button>
      <button class="tool" aria-label="部分追加"><svg><use href="#g-part"/></svg></button>
      <button class="tool" aria-label="リング充填"><svg><use href="#g-fill"/></svg></button>
      <button class="tool" aria-label="リング削除"><svg><use href="#g-dring"/></svg></button>
      <button class="tool" aria-label="部分削除"><svg><use href="#g-dpart"/></svg></button>
      <button class="tool" aria-label="変形"><svg><use href="#g-resh"/></svg></button>
      <button class="tool" aria-label="オフセット"><svg><use href="#g-off"/></svg></button>
      <button class="tool" aria-label="反転"><svg><use href="#g-vert"/></svg></button>
      <button class="tool" aria-label="地物分割"><svg><use href="#scis"/></svg></button>
      <button class="tool" aria-label="部分分割"><svg><use href="#scis"/></svg></button>
      <button class="tool" aria-label="結合"><svg><use href="#g-merge"/></svg></button>
      <button class="tool" aria-label="属性結合"><svg><use href="#g-attr"/></svg></button>
      <button class="tool" aria-label="記号回転"><svg><use href="#g-rsym"/></svg></button>
      <button class="drop dim" aria-label="その他"><svg><use href="#arr"/></svg></button>
      <i class="sep"></i>
      <button class="tool" aria-label="スナップ"><svg><use href="#i-magnet"/></svg></button>
      <button class="tool" aria-label="スナップ対象"><svg><use href="#g-snap"/></svg></button>
      <button class="tool" aria-label="頂点"><svg><use href="#g-seg"/></svg></button>
      <label class="spin"><input type="number" value="12" aria-label="許容範囲"><svg viewBox="0 0 7 11"><path d="M.5 4h6L3.500 .5zM.5 7h6l-3 3.500z" fill="#555"/></svg></label>
      <label class="unit"><select disabled aria-label="単位"><option>px</option></select><svg viewBox="0 0 8 6"><path d="M.5 .5L4 4.500 7.500 .5" fill="none" stroke="#888"/></svg></label>
      <button class="tool" aria-label="トポロジ編集"><svg><use href="#i-topoed"/></svg></button>
      <button class="tool" aria-label="交差スナップ"><svg><use href="#g-xs"/></svg></button>
      <button class="tool" aria-label="トレース"><svg><use href="#g-trace"/></svg></button>
    </div>

    <div class="toolbar">
      <button class="tool cut" aria-label="地物情報"><svg><use href="#i-identify"/></svg></button>
      <button class="tool" aria-label="アクション"><svg><use href="#g-act"/></svg></button>
      <button class="drop dim" aria-label="その他"><svg><use href="#arr"/></svg></button>
      <button class="tool" aria-label="選択"><svg><use href="#i-select"/></svg></button>
      <button class="drop" aria-label="その他"><svg><use href="#arr"/></svg></button>
      <button class="tool" aria-label="値で選択"><svg><use href="#i-selval"/></svg></button>
      <button class="drop" aria-label="その他"><svg><use href="#arr"/></svg></button>
      <button class="tool" aria-label="選択解除"><svg><use href="#i-desel"/></svg></button>
      <button class="tool" aria-label="属性テーブル"><svg><use href="#table"/></svg></button>
      <button class="tool" aria-label="フィールド計算機"><svg><use href="#i-abacus"/></svg></button>
      <button class="tool on" aria-label="ツールボックス"><svg><use href="#gear"/></svg></button>
      <button class="tool" aria-label="統計"><svg><use href="#i-sigma"/></svg></button>
      <button class="tool on" aria-label="計測"><svg><use href="#i-measure"/></svg></button>
      <button class="drop on" aria-label="その他"><svg><use href="#arr"/></svg></button>
      <button class="tool" aria-label="地図ヒント"><svg><use href="#i-tip"/></svg></button>
      <button class="tool" aria-label="テキスト注記"><svg><use href="#i-text"/></svg></button>
      <button class="drop" aria-label="その他"><svg><use href="#arr"/></svg></button>
      <i class="sep"></i>
      <button class="tool" aria-label="現在の編集"><svg><use href="#g-pens"/></svg></button>
      <button class="tool" aria-label="編集モード"><svg><use href="#pencil"/></svg></button>
      <button class="tool" aria-label="編集を保存"><svg><use href="#g-save"/></svg></button>
      <button class="tool" aria-label="地物追加"><svg><use href="#g-add"/></svg></button>
      <button class="tool" aria-label="頂点ツール"><svg><use href="#g-tool"/></svg></button>
      <button class="drop dim" aria-label="その他"><svg><use href="#arr"/></svg></button>
      <button class="tool" aria-label="属性変更"><svg><use href="#g-tabed"/></svg></button>
      <button class="tool" aria-label="削除"><svg><use href="#g-trash"/></svg></button>
      <button class="tool" aria-label="切り取り"><svg><use href="#g-cut"/></svg></button>
      <button class="tool" aria-label="コピー"><svg><use href="#g-copy"/></svg></button>
      <button class="tool" aria-label="貼り付け"><svg><use href="#g-paste"/></svg></button>
      <button class="tool" aria-label="元に戻す"><svg><use href="#g-undo"/></svg></button>
      <button class="tool" aria-label="やり直す"><svg><use href="#g-redo"/></svg></button>
    </div>

    <div class="work">
      <aside class="layers">
        <div class="dock"><span class="dock-name">ー</span>
          <button aria-label="分離"><svg viewBox="0 0 9 9"><path d="M3 3V1h5v4H6M1 3.500h5V8H1z" fill="none" stroke="#222"/><path d="M1 4h5M3 1h5" stroke="#222" stroke-width="1.500"/></svg></button>
          <button aria-label="閉じる"><svg viewBox="0 0 9 9"><path d="M1.500 1.500l6 6M7.500 1.500l-6 6" stroke="#222" stroke-width="1.600"/></svg></button>
        </div>
        <div class="ltools">
          <button aria-label="グループ追加"><svg><use href="#l-group"/></svg></button>
          <button aria-label="表示テーマ"><svg><use href="#l-eye"/></svg></button>
          <button aria-label="フィルター"><svg><use href="#l-filter"/></svg></button>
          <button aria-label="式フィルター"><svg><use href="#l-eps"/></svg></button>
          <button class="drop" aria-label="その他"><svg><use href="#arr"/></svg></button>
          <button aria-label="展開"><svg><use href="#l-exp"/></svg></button>
          <button aria-label="折り畳み"><svg><use href="#l-col"/></svg></button>
          <button class="more">»</button>
        </div>
        <div class="tree">
          <label class="layer"><input type="checkbox" checked><i class="swatch dot"></i><span>cvs_jgd2011_9</span></label>
          <label class="layer sel"><input type="checkbox" checked><i class="swatch blue"></i><span class="ja">カウント</span></label>
          <label class="layer"><input type="checkbox" checked><i class="swatch orange"></i><span class="ja">グリッド</span></label>
        </div>
      </aside>

      <div class="canvas"><svg class="grid" id="grid" width="598" height="540" role="img" aria-label="地図"></svg></div>

      <aside class="proc">
        <div class="dock">プロセッシングツールボ</div>
        <div class="ptools">
          <button aria-label="モデル"><svg><use href="#cog3"/></svg></button>
          <button aria-label="スクリプト"><svg><use href="#python"/></svg></button>
          <button aria-label="履歴"><svg><use href="#clock"/></svg></button>
          <i class="bar"></i>
        </div>
        <label class="search"><svg viewBox="0 0 12 12"><circle cx="5" cy="5" r="3.800" fill="none" stroke="#777" stroke-width="1.300"/><path d="M8 8l3.500 3.500" stroke="#777" stroke-width="1.500"/></svg><input type="text" placeholder="検索…" aria-label="検索"></label>
        <ul class="algs">
          <li><svg class="cv"><use href="#chev"/></svg><svg><use href="#clock"/></svg>最近使用さ</li>
          <li><svg class="cv"><use href="#chev"/></svg><svg><use href="#q"/></svg>グラフィックス</li>
          <li><svg class="cv"><use href="#chev"/></svg><svg><use href="#q"/></svg>データベース</li>
          <li><svg class="cv"><use href="#chev"/></svg><svg><use href="#q"/></svg>データ補完</li>
          <li><svg class="cv"><use href="#chev"/></svg><svg><use href="#q"/></svg>ネットワーク解</li>
          <li><svg class="cv"><use href="#chev"/></svg><svg><use href="#q"/></svg>ファイルツール</li>
          <li><svg class="cv"><use href="#chev"/></svg><svg><use href="#q"/></svg>ベクター作成</li>
          <li><svg class="cv"><use href="#chev"/></svg><svg><use href="#q"/></svg>ベクター選択</li>
          <li><svg class="cv"><use href="#chev"/></svg><svg><use href="#q"/></svg>ベクタオーバー</li>
          <li><svg class="cv"><use href="#chev"/></svg><svg><use href="#q"/></svg>ベクタジオメ</li>
          <li><svg class="cv"><use href="#chev"/></svg><svg><use href="#q"/></svg>ベクタテーブル</li>
          <li><svg class="cv"><use href="#chev"/></svg><svg><use href="#q"/></svg>ベクター一般</li>
          <li><svg class="cv"><use href="#chev"/></svg><svg><use href="#q"/></svg>ベクタ解析</li>
          <li><svg class="cv"><use href="#chev"/></svg><svg><use href="#q"/></svg>ラスタツール</li>
          <li><svg class="cv"><use href="#chev"/></svg><svg><use href="#q"/></svg>ラスタ地形解</li>
          <li><svg class="cv"><use href="#chev"/></svg><svg><use href="#q"/></svg>ラスタ分析</li>
          <li><svg class="cv"><use href="#chev"/></svg><svg><use href="#q"/></svg>レイヤツール</li>
          <li><svg class="cv"><use href="#chev"/></svg><svg><use href="#q"/></svg>地図製作</li>
          <li><svg class="cv"><use href="#chev"/></svg><svg><use href="#p-gdal"/></svg>GDAL</li>
          <li><svg class="cv"><use href="#chev"/></svg><svg><use href="#p-grass"/></svg>GRASS</li>
          <li><svg class="cv"><use href="#chev"/></svg><svg><use href="#tri"/></svg>Qgis2threejs</li>
          <li><svg class="cv"><use href="#chev"/></svg><svg><use href="#gear"/></svg>qgis2web</li>
          <li><svg class="cv"><use href="#chev"/></svg><svg><use href="#p-saga"/></svg>SAGA</li>
          <li><svg class="cv"><use href="#chev"/></svg><svg><use href="#cog3"/></svg>モデル</li>
        </ul>
      </aside>
    </div>

    <div class="ctx" role="menu">
      <button role="menuitem"><svg><use href="#i-zlay"/></svg><span>レイヤの領域にズーム(Z)</span></button>
      <button role="menuitem" class="off"><svg><use href="#i-zlay"/></svg><span>選択範囲にズーム(Z)</span></button>
      <button role="menuitem"><svg><use href="#m-glass"/></svg><span>全体図に表示(S)</span></button>
      <button role="menuitem"><span>地物の数を表示</span></button>
      <button role="menuitem"><span>レイヤのコピー</span></button>
      <button role="menuitem"><span>レイヤの名前を変更(R)</span></button>
      <hr>
      <button role="menuitem"><svg><use href="#m-dup"/></svg><span>レイヤの複製(D)</span></button>
      <button role="menuitem"><svg><use href="#m-del"/></svg><span>レイヤの削除(R)...</span></button>
      <hr>
      <button role="menuitem"><span>トップに移動</span></button>
      <hr>
      <button role="menuitem" class="hot"><svg><use href="#table"/></svg><span>属性テーブルを開く(O)</span></button>
      <button role="menuitem"><svg><use href="#pencil"/></svg><span>編集モード切替</span></button>
      <button role="menuitem"><span>フィルター(F)...</span></button>
      <hr>
      <button role="menuitem"><span>レイヤを表示する縮尺の設定(S)...</span></button>
      <button role="menuitem"><span>CRSの設定</span><svg class="sub"><use href="#sub"/></svg></button>
      <hr>
      <button role="menuitem"><span>エクスポート</span><svg class="sub"><use href="#sub"/></svg></button>
      <hr>
      <button role="menuitem"><span>スタイル</span><svg class="sub"><use href="#sub"/></svg></button>
      <button role="menuitem"><span>プロパティ(P)...</span></button>
    </div>
  </section>

  <section class="counts">
    <table>
      <thead><tr><th>NUMPOINTS</th></tr></thead>
      <tbody>
        <tr><td>3</td></tr><tr><td>1</td></tr><tr><td>0</td></tr><tr><td>4</td></tr>
        <tr><td>0</td></tr><tr><td>2</td></tr><tr><td>3</td></tr><tr><td>2</td></tr>
        <tr><td>0</td></tr><tr><td>0</td></tr><tr><td>0</td></tr><tr><td>0</td></tr>
      </tbody>
    </table>
  </section>
  <div class="edge">
    <div class="scroll">
      <button aria-label="上へ"><svg viewBox="0 0 16 12"><path d="M2 10l6-6 6 6" fill="none" stroke="#555" stroke-width="4"/></svg></button>
      <div class="thumb"></div>
    </div>
  </div>
</main>
<script src="points.js"></script>
</body>
</html>
```
FILE: styles.css
```css
* { box-sizing: border-box; }
body {
  margin: 0;
  background: #fff;
  color: #111;
  font: 10px/14px "Open Sans", "Noto Sans CJK JP", sans-serif;
  font-feature-settings: "palt";
}
button, input, select { font: inherit; font-feature-settings: inherit; color: inherit; }
button { border: 0; padding: 0; background: none; white-space: nowrap; flex: none; }
svg { display: block; flex: none; }
.sprite { position: absolute; width: 0; height: 0; }

.page { display: flex; height: 100vh; overflow: hidden; }

.app { position: relative; flex: 1; min-width: 0; display: flex; flex-direction: column; padding-bottom: 2px; overflow: hidden; }
.title { height: 24px; line-height: 26px; white-space: nowrap; overflow: hidden; }
.menubar { display: flex; height: 18px; align-items: center; gap: 13px; }
.menubar .m-cut { display: flex; justify-content: flex-end; width: 37px; overflow: hidden; }

.toolbar {
  display: flex;
  align-items: center;
  height: 38px;
  background: #f0f0f0;
  border-bottom: 2px solid #d2d2d2;
  border-top: 1px solid #fafafa;
  overflow: hidden;
}
.tool { width: 35px; height: 34px; display: flex; align-items: center; justify-content: center; }
.tool svg { width: 28px; height: 28px; }
.tool.cut { width: 15px; justify-content: flex-end; padding-right: 4px; overflow: hidden; }
.tool.slim { width: 30px; }
.on { background: #c2def5; }
.lead { display: flex; flex: none; width: 425px; }
.drop { width: 11px; height: 34px; display: flex; align-items: center; justify-content: center; color: #111; }
.drop svg { width: 7px; height: 5px; }
.drop.dim { color: #777; }
.sep { flex: none; width: 13px; height: 36px; border-left: 1px solid #bbb; padding-left: 5px; }
.sep::after { content: ""; display: block; height: 30px; margin-top: 3px; border-left: 2px dotted #bdbdbd; }
.more { width: 15px; font-size: 14px; font-weight: 700; }
.spin, .unit { position: relative; flex: none; width: 70px; height: 17px; border: 1px solid #ccc; background: #f4f4f4; color: #777; }
.spin input { appearance: textfield; width: 52px; height: 15px; border: 0; padding: 0 3px; background: none; display: block; }
.spin input::-webkit-inner-spin-button { appearance: none; }
.spin svg { position: absolute; right: 4px; top: 2px; width: 7px; height: 11px; }
.unit { width: 57px; background: #ccc; border-color: #bbb; }
.unit select { appearance: none; width: 55px; height: 15px; border: 0; padding: 0 3px; background: none; opacity: 1; color: #777; display: block; }
.unit svg { position: absolute; right: 3px; top: 5px; width: 8px; height: 6px; }

.work { flex: 1; min-height: 0; display: flex; background: #f0f0f0; }
.dock { display: flex; align-items: center; height: 18px; background: #d9d9d9; border: 1px solid #bdbdbd; white-space: nowrap; overflow: hidden; }
.layers { flex: none; width: 202px; display: flex; flex-direction: column; }
.layers .dock { border-left: 0; padding-right: 6px; gap: 10px; }
.dock-name { flex: 1; }
.dock svg { width: 9px; height: 9px; }
.ltools { display: flex; align-items: center; height: 34px; padding-left: 4px; gap: 6px; }
.ltools svg { width: 22px; height: 22px; }
.ltools .drop { width: 7px; }
.ltools .drop svg { width: 7px; height: 5px; }
.tree { flex: 1; background: #fff; border: solid #8c9199; border-width: 1px 1px 0 0; }
.layer { display: flex; align-items: center; height: 18px; font-size: 11px; font-weight: 600; border: 1px solid transparent; border-left: 0; }
.layer .ja { font-size: 10px; }
.layer.sel { background: #cce8ff; border: 1px dotted #444; border-left: 0; text-decoration: underline; }
.layer input { appearance: none; width: 12px; height: 12px; margin: 0 4px 0 -7px; border: 1px solid #444; background: #fff; display: flex; }
.layer input::after { content: ""; width: 4px; height: 8px; margin-left: 4px; border: solid #222; border-width: 0 1px 1px 0; transform: rotate(40deg); }
.swatch { width: 15px; height: 15px; margin-right: 5px; border: 1px solid #4b5a9e; background: #6b7ac4; }
.swatch.orange { background: #e8734c; border-color: #9b4a2f; }
.swatch.dot { width: 4px; height: 4px; margin: 0 10px 0 6px; border: 0; border-radius: 2px; background: #f01428; }

.canvas { flex: 1; min-width: 0; margin-left: 3px; padding: 45px 0 0 14px; background: #fff; border: 1px solid #7f848c; border-bottom: 0; overflow: hidden; }
.grid { overflow: visible; }

.proc { flex: none; width: 93px; margin-left: 3px; display: flex; flex-direction: column; overflow: hidden; }
.proc .dock { border-right: 0; padding-left: 3px; }
.ptools { display: flex; align-items: center; height: 34px; padding-left: 5px; gap: 7px; }
.ptools svg { width: 21px; height: 21px; }
.bar { width: 1px; height: 18px; background: #666; }
.search { display: flex; align-items: center; gap: 8px; height: 18px; padding-left: 7px; background: #fff; border: 1px solid #8c9199; border-right: 0; }
.search svg { width: 12px; height: 12px; }
.search input { width: 60px; height: 16px; border: 0; padding: 0; background: none; font-style: italic; }
.search input::placeholder { color: #999; }
.algs { flex: 1; margin: 0; padding: 0; list-style: none; background: #fff; border-left: 1px solid #8c9199; overflow: hidden; }
.algs li { display: flex; align-items: center; height: 18px; white-space: nowrap; padding-left: 5px; }
.algs svg { width: 14px; height: 14px; margin-right: 5px; }
.algs .cv { width: 8px; height: 10px; margin-right: 8px; }

.ctx { position: absolute; left: 72px; top: 278px; width: 207px; padding: 1px 3px; background: #f0f0f0; border: 1px solid #b4b4b4; box-shadow: 3px 3px 3px rgba(0, 0, 0, .5); }
.ctx button { position: relative; display: flex; align-items: center; width: 100%; height: 20px; padding-left: 28px; }
.ctx svg { position: absolute; left: 2px; top: 2px; width: 15px; height: 15px; }
.ctx .sub { left: auto; right: 9px; top: 6px; width: 5px; height: 8px; }
.ctx hr { height: 1px; margin: 3px 0 4px 24px; border: 0; background: #d4d4d4; }
.ctx .off { color: #8b8b8b; }
.ctx .off svg { opacity: .45; }
.ctx .hot { background: #91c9f7; outline: 6px solid #fe0000; z-index: 1; }

.counts { flex: none; width: 189px; margin-left: 37px; border: 6px solid #fe0000; overflow: hidden; font-size: 22px; line-height: 30px; color: #222; }
.counts table { width: 100%; border-collapse: collapse; }
.counts th { height: 42px; padding: 0; font-weight: 400; text-align: center; }
.counts td { height: 56px; padding: 2px 4px 0; text-align: right; border-bottom: 2px solid #d6d6d6; }
.counts tr:nth-child(even) td { background: repeating-conic-gradient(#f0f0f0 0 25%, #f9f9f9 0 50%) 0 0 / 4px 4px; }

.edge { flex: none; width: 51px; display: flex; justify-content: flex-end; border-top: 2px solid #0a0a0a; border-right: 3px solid #0a0a0a; }
.scroll { flex: 1; margin-top: 2px; border-top: 2px solid #8a909c; border-right: 3px solid #8a909c; padding: 1px 2px 0 15px; background: #fff; display: flex; flex-direction: column; }
.scroll button { height: 32px; background: #f0f0f0; display: flex; align-items: center; justify-content: center; }
.scroll button svg { width: 16px; height: 12px; }
.scroll::after { content: ""; flex: 1; background: #f0f0f0; }
.thumb { height: 34px; background: #cdcdcd; }
```
FILE: points.js
```js
// Draws the mesh layer and the point layer on the map canvas.
(function () {
  var svg = document.getElementById('grid');
  var NS = 'http://www.w3.org/2000/svg';
  var CELL = 9.475, COLS = 63, ROWS = 57, W = CELL * COLS;

  function add(name, attrs) {
    var el = document.createElementNS(NS, name);
    for (var k in attrs) el.setAttribute(k, attrs[k]);
    svg.appendChild(el);
  }

  add('rect', { x: 0, y: 0, width: W, height: CELL * ROWS, fill: '#9a7db8' });
  var d = '';
  for (var i = 0; i <= COLS; i++) d += 'M' + (i * CELL + 0.5) + ' 0V' + CELL * ROWS;
  for (i = 0; i <= ROWS; i++) d += 'M0 ' + (i * CELL + 0.5) + 'H' + W;
  add('path', { d: d, stroke: '#2f2938', 'stroke-width': 1.4, fill: 'none' });

  // Points per 20px square, from the west edge (x 60) and the top of the mesh.
  var density = [
    '000000000000033001100000000',
    '000100000000052341200000000',
    '000034435300032364423000000',
    '005435553373363333333220000',
    '004455443455323434343443200',
    '344444444456333233343334300',
    '455443343566333334323323300',
    '454543444455444543343222330',
    '444454445755565554433323420',
    '344343434754555555553444330',
    '334444555655666755544354121',
    '485565565665688766544343221',
    '434344556876788876654222220',
    '454433556765767655543322210',
    '434444455665765555433323220',
    '444444444566675544433233230',
    '433344443855575444233044200',
    '433333445655753333202022100',
    '423333333444542202010000000',
    '324443334344532430000000000',
    '323332333445403000000000000',
    '000034443445500000000000000',
    '000000334344210000000000000',
    '000000013445210000000000000'
  ];
  var amount = [0, 1, 2, 4, 5, 7, 10, 15, 20, 26];
  // x, y, spread, number of points
  var towns = [
    [246, 172, 6, 26], [256, 183, 6, 22], [266, 68, 5, 18], [291, 124, 6, 20],
    [353, 220, 9, 45], [366, 242, 10, 45], [334, 245, 8, 25], [228, 250, 9, 50],
    [242, 258, 7, 25], [227, 322, 7, 36], [322, 308, 7, 30], [323, 328, 7, 30],
    [308, 350, 6, 20], [232, 275, 6, 20], [176, 341, 5, 14], [268, 394, 6, 16],
    [110, 241, 5, 14], [150, 238, 5, 12], [178, 238, 6, 14], [172, 315, 5, 14],
    [497, 206, 5, 12], [443, 247, 5, 14], [403, 132, 5, 12], [390, 327, 5, 12],
    [300, 470, 5, 12], [301, 428, 6, 14], [480, 98, 5, 9], [540, 178, 5, 9],
    [260, 358, 6, 16], [316, 182, 5, 12], [140, 88, 4, 8], [120, 77, 5, 8]
  ];

  var seed = 20119;
  function rnd() {
    seed = (seed * 1103515245 + 12345) % 2147483648;
    return seed / 2147483648;
  }

  var p = '';
  function dot(x, y) {
    p += 'M' + x.toFixed(1) + ' ' + y.toFixed(1) + 'h.1';
  }
  density.forEach(function (row, r) {
    for (var c = 0; c < row.length; c++) {
      var n = amount[+row[c]], x, y;
      for (var k = 0; k < n; k++) {
        if (k && rnd() < 0.4) {
          x += (rnd() - 0.5) * 8;
          y += (rnd() - 0.5) * 8;
        } else {
          x = 60 + (c + rnd()) * 20;
          y = (r + rnd()) * 20;
        }
        dot(x, y);
      }
    }
  });
  towns.forEach(function (t) {
    for (var k = 0; k < t[3]; k++) {
      var a = rnd() * 6.283, q = (rnd() + rnd()) * t[2];
      dot(t[0] + Math.cos(a) * q, t[1] + Math.sin(a) * q);
    }
  });
  add('path', { d: p, stroke: '#ff0019', 'stroke-width': 3.8, 'stroke-linecap': 'round', fill: 'none' });
})();
```
